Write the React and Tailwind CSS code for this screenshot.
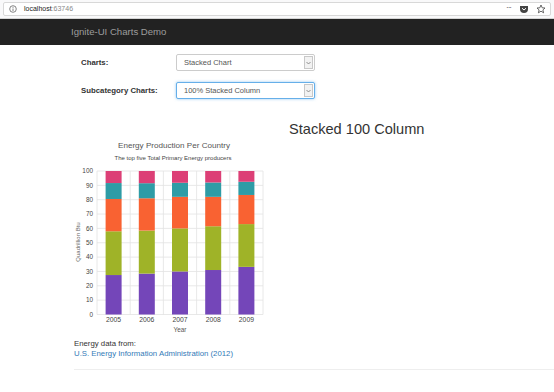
import React from "react";

const COLORS = ["#7446B9", "#9FB328", "#F96232", "#2E9CA6", "#DC3F76"];
const DATA = [
  { year: "2005", v: [27.5, 58, 80.5, 91.6, 100] },
  { year: "2006", v: [28.5, 58.5, 81, 91.5, 100] },
  { year: "2007", v: [30, 60, 82, 91.8, 100] },
  { year: "2008", v: [31, 61.5, 82, 92, 100] },
  { year: "2009", v: [33.2, 63, 83.3, 92.5, 100] },
];

const OX = 70;
const OY = 138;
const y = (v) => 315.5 - 1.435 * v - OY;
const PL = 97 - OX;
const PR = 263 - OX;
const STEP = (PR - PL) / 5;

function Chart() {
  const ticks = [0, 10, 20, 30, 40, 50, 60, 70, 80, 90, 100];
  return (
    <svg width="200" height="200" viewBox="0 0 200 200" style={{ fontFamily: "'Liberation Sans', Arial, sans-serif" }}>
      <text x={174 - OX} y={149 - OY} textAnchor="middle" fontSize="8.1" fill="#555">Energy Production Per Country</text>
      <text x={173 - OX} y={161 - OY} textAnchor="middle" fontSize="6" fill="#444">The top five Total Primary Energy producers</text>
      {ticks.map((t) => (
        <g key={t}>
          <line x1={PL} x2={PR} y1={y(t)} y2={y(t)} stroke="#e2e2e2" strokeWidth="0.8" />
          <text x={93 - OX} y={y(t) + 2.2} textAnchor="end" fontSize="6.4" fill="#444">{t}</text>
        </g>
      ))}
      {[0, 1, 2, 3, 4, 5].map((i) => (
        <line key={i} x1={PL + STEP * i} x2={PL + STEP * i} y1={y(100)} y2={y(0)} stroke="#e2e2e2" strokeWidth="0.8" />
      ))}
      {DATA.map((d, i) => {
        const cx = PL + STEP * (i + 0.5);
        let prev = 0;
        return (
          <g key={d.year}>
            {d.v.map((val, k) => {
              const r = (
                <rect key={k} x={cx - 8} width="16" y={y(val)} height={y(prev) - y(val)} fill={COLORS[k]} />
              );
              prev = val;
              return r;
            })}
            <text x={cx} y={323 - OY} textAnchor="middle" fontSize="6.8" fill="#444">{d.year}</text>
          </g>
        );
      })}
      <text x={(PL + PR) / 2} y={332.5 - OY} textAnchor="middle" fontSize="6.4" fill="#555">Year</text>
      <text transform={`translate(${80 - OX}, ${243 - OY}) rotate(-90)`} textAnchor="middle" fontSize="6" fill="#666">Quadrillion Btu</text>
    </svg>
  );
}

function SelectBox({ value, focused }) {
  return (
    <div
      className={`flex items-center w-[139px] h-[17px] bg-white border ${
        focused ? "border-[#66afe9] shadow-[0_0_3px_rgba(102,175,233,0.7)]" : "border-[#ccc]"
      } rounded-[2px]`}
    >
      <span className="flex-1 pl-[7px] text-[7.5px] text-[#555]">{value}</span>
      <span className="w-[9px] h-[13px] mr-[1px] border border-[#c8c8c8] bg-[#f2f2f2] flex items-center justify-center">
        <svg width="5" height="4" viewBox="0 0 5 4">
          <path d="M0.5 1 L2.5 3 L4.5 1" stroke="#777" strokeWidth="0.8" fill="none" />
        </svg>
      </span>
    </div>
  );
}

export default function App() {
  return (
    <div className="w-[554px] h-[392px] bg-white overflow-hidden" style={{ fontFamily: "'Liberation Sans', Arial, sans-serif" }}>
      {/* browser bar */}
      <div className="h-[19px] bg-[#f9f9fa] border-b border-[#d4d4d4] px-[3px] pt-[2px]">
        <div className="h-[14px] bg-white border border-[#d8d8d8] rounded-[2px] flex items-center pl-[5px] pr-[4px]">
          <svg width="8" height="8" viewBox="0 0 8 8">
            <circle cx="4" cy="4" r="3.3" stroke="#666" strokeWidth="0.8" fill="none" />
            <path d="M4 3.5 V6" stroke="#666" strokeWidth="0.8" />
            <circle cx="4" cy="2.3" r="0.5" fill="#666" />
          </svg>
          <span className="ml-[7px] text-[7px] text-[#222]">localhost</span>
          <span className="text-[7px] text-[#888]">:63746</span>
          <div className="flex-1" />
          <span className="text-[8px] text-[#333] tracking-[-1px] leading-none mb-[3px]">···</span>
          <svg className="ml-[8px]" width="10" height="9" viewBox="0 0 10 9">
            <path d="M1 1 H9 V4 A4 4 0 0 1 1 4 Z" fill="#444" />
            <path d="M3 3.2 L5 5 L7 3.2" stroke="#fff" strokeWidth="1" fill="none" />
          </svg>
          <svg className="ml-[7px]" width="10" height="10" viewBox="0 0 10 10">
            <path d="M5 1 L6.2 3.8 L9 4 L6.9 5.9 L7.6 8.8 L5 7.2 L2.4 8.8 L3.1 5.9 L1 4 L3.8 3.8 Z" stroke="#444" strokeWidth="0.8" fill="none" strokeLinejoin="round" />
          </svg>
        </div>
      </div>
      {/* navbar */}
      <div className="h-[26px] bg-[#222] flex items-center pl-[71px]">
        <span className="text-[9.6px] text-[#9d9d9d]">Ignite-UI Charts Demo</span>
      </div>
      {/* form */}
      <div className="pt-[9px] pl-[81px]">
        <div className="flex items-center h-[17px]">
          <span className="w-[95px] text-[7.8px] font-bold text-[#333]">Charts:</span>
          <SelectBox value="Stacked Chart" />
        </div>
        <div className="flex items-center h-[17px] mt-[11px]">
          <span className="w-[95px] text-[7.8px] font-bold text-[#333]">Subcategory Charts:</span>
          <SelectBox value="100% Stacked Column" focused />
        </div>
      </div>
      {/* main */}
      <div className="flex pl-[70px] mt-[20px]">
        <div className="w-[200px]">
          <div className="h-[18px]" />
          <Chart />
        </div>
        <div className="pl-[19px]">
          <div className="text-[14.6px] text-[#333] leading-[18px] mt-[1px]">Stacked 100 Column</div>
        </div>
      </div>
      <div className="pl-[74px] mt-[2px]">
        <div className="text-[7.8px] text-[#333] leading-[10px]">Energy data from:</div>
        <div className="text-[7.8px] text-[#337ab7] leading-[10px]">U.S. Energy Information Administration (2012)</div>
        <div className="mt-[10px] border-t border-[#eee]" />
      </div>
    </div>
  );
}
